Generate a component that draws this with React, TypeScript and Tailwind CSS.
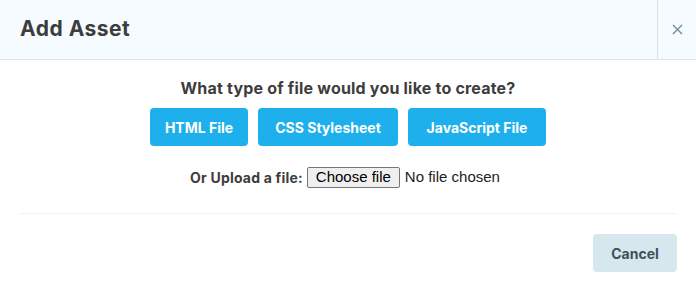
import React from "react";

export default function App() {
  const font = { fontFamily: "Inter, 'Noto Sans', sans-serif" };
  const sys = { fontFamily: "'Liberation Sans', Arial, sans-serif" };
  return (
    <div className="w-[696px] h-[289px] bg-white flex flex-col" style={font}>
      <div className="flex h-[60px] bg-[#f5fbfe] border-b border-[#dbe7eb]">
        <div className="flex-1 flex items-center pl-5 pb-[2px] text-[21px] font-bold text-[#3d3d3d] tracking-[0.5px]">
          Add Asset
        </div>
        <button className="w-[39px] border-l border-[#d6e3e8] flex items-center justify-center text-[#6b8894]">
          <svg width="11" height="11" viewBox="0 0 11 11" fill="none" stroke="currentColor" strokeWidth="1.3">
            <path d="M1 1 L10 10 M10 1 L1 10" />
          </svg>
        </button>
      </div>
      <div className="flex flex-col items-center pt-[16px]">
        <div className="text-[16px] leading-[24px] font-bold text-[#3d3d3d] tracking-[0.2px]">
          What type of file would you like to create?
        </div>
        <div className="flex gap-[10px] mt-[8px]">
          <button className="h-[38px] w-[98px] rounded-[4px] bg-[#1eb0ec] text-white text-[14px] font-bold">HTML File</button>
          <button className="h-[38px] w-[140px] rounded-[4px] bg-[#1eb0ec] text-white text-[14px] font-bold">CSS Stylesheet</button>
          <button className="h-[38px] w-[138px] rounded-[4px] bg-[#1eb0ec] text-white text-[14px] font-bold">JavaScript File</button>
        </div>
        <div className="flex items-center mt-[20px] h-[22px] mr-[6px]">
          <span className="text-[14px] font-bold text-[#3d3d3d] mr-[4px] tracking-[0.2px]">Or Upload a file:</span>
          <span className="h-[21px] w-[93px] flex items-center justify-center border border-[#767676] rounded-[2px] bg-[#efefef] text-[15px] text-black" style={sys}>
            Choose file
          </span>
          <span className="ml-[5px] text-[15px] text-[#222]" style={sys}>No file chosen</span>
        </div>
      </div>
      <div className="mt-[25px] mx-[19px] border-t border-[#f3f3f3] flex justify-end pt-[20px]">
        <button className="h-[38px] w-[84px] rounded-[4px] bg-[#d6e8ee] text-[#3e505a] text-[14px] font-bold">Cancel</button>
      </div>
    </div>
  );
}
